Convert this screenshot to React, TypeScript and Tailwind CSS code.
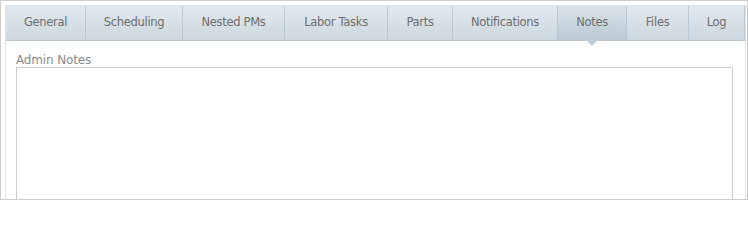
import React from "react";

const tabs = [
  { label: "General", w: "w-[80px]" },
  { label: "Scheduling", w: "w-[97px]" },
  { label: "Nested PMs", w: "w-[102px]" },
  { label: "Labor Tasks", w: "w-[103px]" },
  { label: "Parts", w: "w-[65px]" },
  { label: "Notifications", w: "w-[105px]" },
  { label: "Notes", w: "w-[69px]", active: true },
  { label: "Files", w: "w-[62px]" },
  { label: "Log", w: "w-[56px]" },
];

export default function App() {
  return (
    <div
      className="w-[748px] h-[200px] overflow-hidden border border-[#cccccc] bg-white pl-[4px] pt-[4px] pr-[1px]"
      style={{ fontFamily: '"DejaVu Sans", Verdana, sans-serif' }}
    >
      <div className="h-[220px] border border-[#dde3e8] bg-white">
        <div className="flex h-[35px]">
          {tabs.map((t) => (
            <div
              key={t.label}
              className={`relative ${t.w} shrink-0 flex items-center justify-center border-r border-b border-[#b9c8d2] text-[11.5px] tracking-[-0.3px] text-[#6e6e6e] ${
                t.active
                  ? "bg-gradient-to-b from-[#dbe4eb] to-[#b9c9d4]"
                  : "bg-gradient-to-b from-[#e2e9ee] to-[#cbd7df]"
              }`}
            >
              {t.label}
              {t.active && (
                <span className="absolute left-1/2 -translate-x-1/2 top-full w-0 h-0 border-l-[6px] border-r-[6px] border-t-[6px] border-l-transparent border-r-transparent border-t-[#bccbd5]" />
              )}
            </div>
          ))}
        </div>
        <div className="pl-[10px] pr-[12px] pt-[12px]">
          <div className="text-[12px] leading-[14px] text-[#8a8a8a] tracking-[-0.15px]">Admin Notes</div>
          <div className="h-[160px] border border-[#cdcdd3] bg-white" />
        </div>
      </div>
    </div>
  );
}
